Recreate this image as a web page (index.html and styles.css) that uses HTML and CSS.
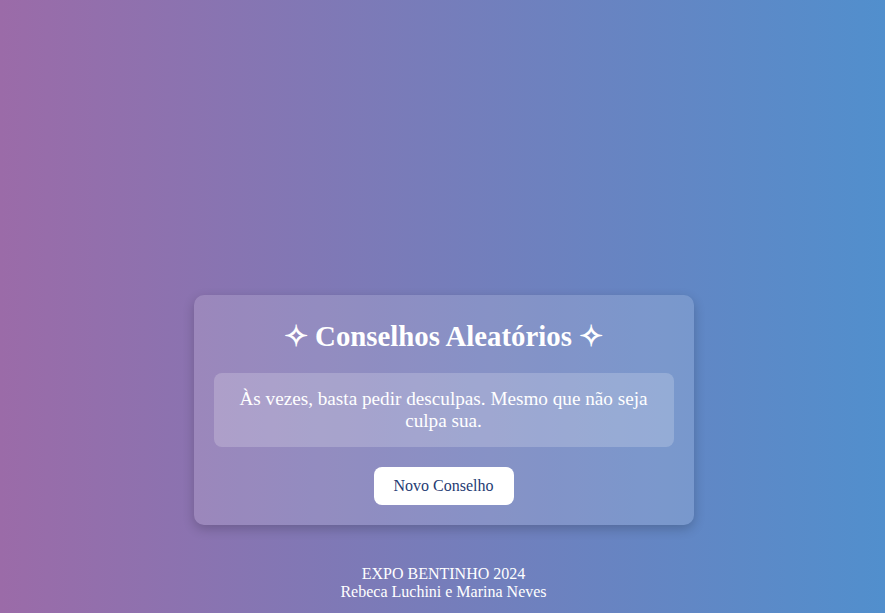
FILE: index.html
```html
<!DOCTYPE html>
<html lang="pt-BR">
<head>
<meta charset="utf-8">
<title>Conselhos Aleatórios</title>
<link rel="stylesheet" href="styles.css">
</head>
<body>
<main class="page">
  <section class="card">
    <h1 class="title">✧ Conselhos Aleatórios ✧</h1>
    <div class="advice">Às vezes, basta pedir desculpas. Mesmo que não seja culpa sua.</div>
    <button class="btn" type="button">Novo Conselho</button>
  </section>
  <footer class="footer">
    <div>EXPO BENTINHO 2024</div>
    <div>Rebeca Luchini e Marina Neves</div>
  </footer>
</main>
</body>
</html>
```
FILE: styles.css
```css
html, body {
  margin: 0;
  padding: 0;
  height: 100%;
}
body {
  background: linear-gradient(to right, #9b6ba8, #518fcd);
  font-family: "Liberation Serif", "Times New Roman", serif;
  color: #fff;
}
.page {
  display: flex;
  flex-direction: column;
  align-items: center;
  padding-top: 295px;
  padding-left: 2px;
}
.card {
  width: 500px;
  box-sizing: border-box;
  padding: 20px;
  border-radius: 10px;
  background: rgba(255, 255, 255, 0.15);
  box-shadow: 0 4px 12px rgba(0, 0, 0, 0.2);
  display: flex;
  flex-direction: column;
  align-items: center;
}
.title {
  margin: 5px 0 20px;
  font-size: 28.8px;
  line-height: 33px;
  font-weight: bold;
  text-align: center;
}
.advice {
  align-self: stretch;
  padding: 15px 20px;
  border-radius: 8px;
  background: rgba(255, 255, 255, 0.2);
  font-size: 19.2px;
  line-height: 22px;
  text-align: center;
}
.btn {
  margin-top: 20px;
  width: 140px;
  height: 38px;
  border: none;
  border-radius: 8px;
  background: #fff;
  color: #1f3b73;
  font-family: "Liberation Serif", "Times New Roman", serif;
  font-size: 16px;
  cursor: pointer;
}
.footer {
  margin-top: 40px;
  font-size: 16px;
  line-height: 18px;
  text-align: center;
}
```
